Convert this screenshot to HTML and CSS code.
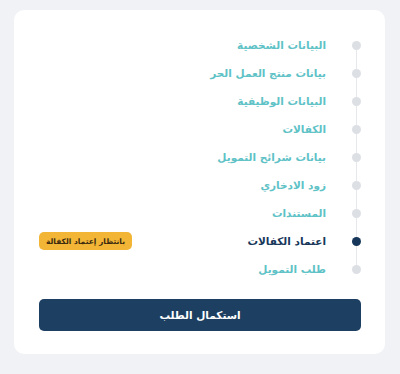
FILE: index.html
```html
<!DOCTYPE html>
<html lang="ar" dir="rtl">
<head>
<meta charset="utf-8">
<link rel="stylesheet" href="styles.css">
</head>
<body>
<div class="card">
  <ul class="steps">
    <li class="step"><span class="dot"></span><span class="label">البيانات الشخصية</span></li>
    <li class="step"><span class="dot"></span><span class="label">بيانات منتج العمل الحر</span></li>
    <li class="step"><span class="dot"></span><span class="label">البيانات الوظيفية</span></li>
    <li class="step"><span class="dot"></span><span class="label">الكفالات</span></li>
    <li class="step"><span class="dot"></span><span class="label">بيانات شرائح التمويل</span></li>
    <li class="step"><span class="dot"></span><span class="label">زود الادخاري</span></li>
    <li class="step"><span class="dot"></span><span class="label">المستندات</span></li>
    <li class="step active"><span class="dot"></span><span class="label">اعتماد الكفالات</span><span class="badge">بانتظار إعتماد الكفالة</span></li>
    <li class="step"><span class="dot"></span><span class="label">طلب التمويل</span></li>
  </ul>
  <button class="submit">استكمال الطلب</button>
</div>
</body>
</html>
```

FILE: styles.css
```css
* { box-sizing: border-box; }
html, body { margin: 0; padding: 0; }
body {
  background: #f0f2f5;
  font-family: "DejaVu Sans", sans-serif;
  width: 400px;
  height: 374px;
  padding: 10px 15px 0 14px;
}
.card {
  background: #ffffff;
  border-radius: 10px;
  height: 344px;
  padding: 21px 24px 23px 25px;
  display: flex;
  flex-direction: column;
}
.steps {
  list-style: none;
  margin: 0;
  padding: 0;
  position: relative;
}
.steps::before {
  content: "";
  position: absolute;
  right: 4.5px;
  top: 14px;
  bottom: 14px;
  width: 1px;
  background: #e6e8ec;
}
.step {
  height: 28px;
  display: flex;
  align-items: center;
  gap: 26px;
}
.dot {
  width: 9px;
  height: 9px;
  border-radius: 50%;
  background: #dcdfe4;
  flex: none;
  position: relative;
}
.label {
  font-size: 10.5px;
  color: #5ec2c6;
  font-weight: bold;
}
.step.active .dot { background: #17375a; }
.step.active .label { color: #17375a; }
.badge {
  margin-right: auto;
  background: #f2b536;
  color: #3b2a0e;
  font-size: 7.5px;
  font-weight: bold;
  height: 18px;
  padding: 0 7px;
  border-radius: 5px;
  display: flex;
  align-items: center;
}
.submit {
  margin-top: 16px;
  height: 32px;
  border: none;
  border-radius: 5px;
  background: #1d3f61;
  color: #ffffff;
  font-family: "DejaVu Sans", sans-serif;
  font-size: 10.5px;
  font-weight: bold;
}
```
